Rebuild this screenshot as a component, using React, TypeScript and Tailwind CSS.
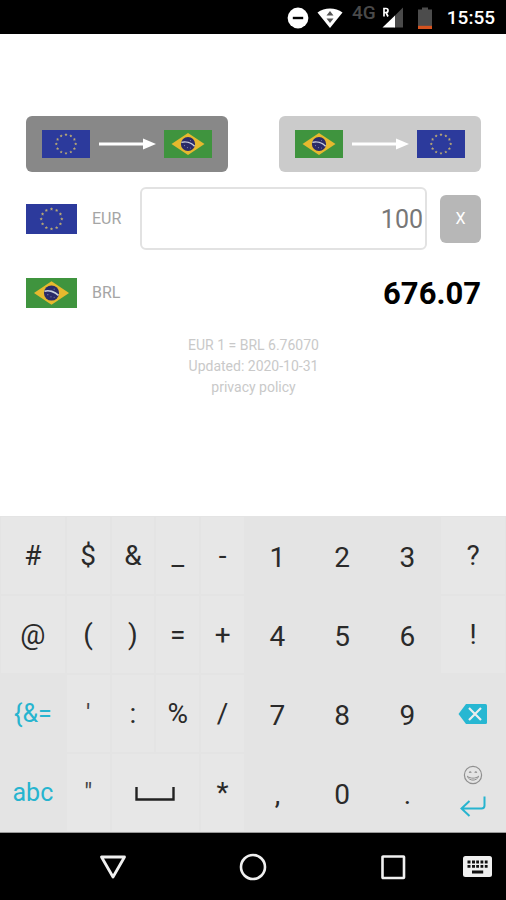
import { useState } from "react";

const STAR_ANGLES = [0, 30, 60, 90, 120, 150, 180, 210, 240, 270, 300, 330];

function starPoints(cx: number, cy: number, r: number) {
  const points: string[] = [];
  for (let i = 0; i < 10; i++) {
    const radius = i % 2 === 0 ? r : r * 0.5;
    const a = (Math.PI / 5) * i - Math.PI / 2;
    points.push(`${(cx + radius * Math.cos(a)).toFixed(2)},${(cy + radius * Math.sin(a)).toFixed(2)}`);
  }
  return points.join(" ");
}

function EuFlag({ className }: { className: string }) {
  return (
    <svg viewBox="0 0 48 28" preserveAspectRatio="none" className={className} role="img" aria-label="EU flag">
      <rect width="48" height="28" fill="#2c3a9c" />
      {STAR_ANGLES.map((deg) => {
        const a = (deg * Math.PI) / 180;
        return (
          <polygon
            key={deg}
            points={starPoints(24 + 9.7 * Math.cos(a), 14 + 9.3 * Math.sin(a), 1.6)}
            fill="#b8a874"
          />
        );
      })}
    </svg>
  );
}

function BrazilFlag({ className }: { className: string }) {
  return (
    <svg viewBox="0 0 48 28" preserveAspectRatio="none" className={className} role="img" aria-label="Brazil flag">
      <rect width="48" height="28" fill="#3f943e" />
      <polygon points="24,3 40.5,14 24,25 7.5,14" fill="#e6b92e" />
      <circle cx="24" cy="14" r="7.1" fill="#2a2a68" />
      <path d="M17.4 12.4 C21.5 11.2 27 12.6 30.6 16.2" fill="none" stroke="#c9cfdd" strokeWidth="1.5" />
      <g fill="#8285ab">
        <circle cx="20.5" cy="15.6" r="0.6" />
        <circle cx="23.5" cy="17.6" r="0.6" />
        <circle cx="26.5" cy="18" r="0.5" />
        <circle cx="26.5" cy="10.4" r="0.5" />
      </g>
    </svg>
  );
}

function Arrow() {
  return (
    <svg viewBox="0 0 58 12" className="h-3 w-[58px]" aria-hidden="true">
      <path d="M1 6H46" stroke="#fff" strokeWidth="3" />
      <path d="M45 0.5L58 6L45 11.5Z" fill="#fff" />
    </svg>
  );
}

function StatusBar() {
  return (
    <header className="flex h-[34px] items-center justify-end bg-black pt-px pr-[11px]">
      <svg viewBox="0 0 22 22" className="mr-2 size-[22px]" aria-hidden="true">
        <circle cx="11" cy="11" r="10.4" fill="#fff" />
        <rect x="5.8" y="9.8" width="10.4" height="2.4" fill="#000" />
      </svg>
      <svg viewBox="0 0 26 20" className="mr-[9px] h-5 w-[26px]" aria-hidden="true">
        <path d="M0.5 4.6C7.5-1 18.5-1 25.5 4.6L13 20Z" fill="#fff" />
        <path d="M13 3L16.5 7.4H9.5Z M13 15L16.500 10.600H9.500Z" fill="#555" />
      </svg>
      <span className="mr-[6px] -mt-[9px] text-[19px] leading-5 font-medium text-[#4a4a4a]">4G</span>
      <svg viewBox="0 0 22 21" className="mr-[14px] h-[21px] w-[22px]" aria-hidden="true">
        <path d="M21 0.5V20.5H12V9.5Z" fill="#4a4a4a" />
        <path d="M0.5 20.5L13 8.5V20.5Z" fill="#fff" />
        <path d="M2 9.5V1.5H4A2 2 0 0 1 4 5.5H2M4 5.5L6 9.5" fill="none" stroke="#fff" strokeWidth="1.7" />
      </svg>
      <svg viewBox="0 0 14 22" className="mr-[15px] h-[22px] w-[14px]" aria-hidden="true">
        <path d="M4 0.5H10V2.5H14V22H0V2.5H4Z" fill="#4c4c4c" />
        <rect y="18.8" width="14" height="3.2" fill="#d5531f" />
      </svg>
      <time className="text-[19px] leading-6 font-medium text-white">15:55</time>
    </header>
  );
}

type Direction = "eur-brl" | "brl-eur";

function Converter() {
  const [direction, setDirection] = useState<Direction>("eur-brl");
  const [amount, setAmount] = useState("100");
  const active = "bg-[#888]";
  const idle = "bg-[#cbcbcb]";

  return (
    <main className="flex-1 bg-white pt-[82px] pr-[25px] pb-6 pl-[26px]">
      <div className="grid grid-cols-2 gap-[51px]">
        <button
          type="button"
          aria-label="EUR to BRL"
          aria-pressed={direction === "eur-brl"}
          onClick={() => setDirection("eur-brl")}
          className={`flex h-14 items-center justify-between rounded-md px-4 ${direction === "eur-brl" ? active : idle}`}
        >
          <EuFlag className="h-7 w-12" />
          <Arrow />
          <BrazilFlag className="h-7 w-12" />
        </button>
        <button
          type="button"
          aria-label="BRL to EUR"
          aria-pressed={direction === "brl-eur"}
          onClick={() => setDirection("brl-eur")}
          className={`flex h-14 items-center justify-between rounded-md px-4 ${direction === "brl-eur" ? active : idle}`}
        >
          <BrazilFlag className="h-7 w-12" />
          <Arrow />
          <EuFlag className="h-7 w-12" />
        </button>
      </div>

      <div className="mt-[15px] flex items-center">
        <EuFlag className="h-[30px] w-[51px] shrink-0" />
        <label htmlFor="amount" className="w-[63px] shrink-0 pl-[15px] text-[16px] leading-6 text-[#a5a5a5]">
          EUR
        </label>
        <input
          id="amount"
          inputMode="decimal"
          value={amount}
          onChange={(e) => setAmount(e.target.value)}
          className="h-[63px] min-w-0 flex-1 rounded-md border-2 border-[#e2e2e2] bg-white pt-[2px] pr-[2px] text-right text-[25px] text-[#777] outline-none"
        />
        <button
          type="button"
          aria-label="Clear"
          onClick={() => setAmount("")}
          className="ml-[13px] h-12 w-[41px] shrink-0 rounded-md bg-[#b7b7b7] text-[16px] text-white"
        >
          X
        </button>
      </div>

      <div className="mt-[23px] flex h-10 items-center">
        <BrazilFlag className="h-[30px] w-[51px] shrink-0" />
        <span className="pl-[15px] text-[16px] leading-6 text-[#a5a5a5]">BRL</span>
        <output htmlFor="amount" className="ml-auto pt-[2px] text-[31px] leading-10 font-bold text-black">
          676.07
        </output>
      </div>

      <div className="mt-[22px] text-center text-[14px] leading-[21px] text-[#c9c9c9]">
        <p>EUR 1 = BRL 6.76070</p>
        <p>Updated: 2020-10-31</p>
        <a href="#privacy">privacy policy</a>
      </div>
    </main>
  );
}

function Tile({ label }: { label: string }) {
  return (
    <button type="button" className="m-px flex items-center justify-center bg-[#e7e7e7] text-[28px] text-[#2a2a2a]">
      {label}
    </button>
  );
}

function Digit({ label }: { label: string }) {
  return (
    <button type="button" className="flex items-center justify-center pt-1 text-[28px] text-[#2a2a2a]">
      {label}
    </button>
  );
}

function QuoteTile({ label }: { label: string }) {
  return (
    <button type="button" className="m-px flex items-center justify-center bg-[#e7e7e7] text-[25px] text-[#444]">
      {label}
    </button>
  );
}

function ModeKey({ label }: { label: string }) {
  return (
    <button type="button" className="flex items-center justify-center text-[25px] text-[#27b4cf]">
      {label}
    </button>
  );
}

function Keyboard() {
  return (
    <section
      aria-label="Keyboard"
      className="grid auto-rows-[79px] grid-cols-[66fr_45fr_45fr_45fr_45fr_65fr_65fr_66fr_66fr] border-b border-[#999] bg-[#e4e4e4]"
    >
      <Tile label="#" />
      <Tile label="$" />
      <Tile label="&" />
      <Tile label="_" />
      <Tile label="-" />
      <Digit label="1" />
      <Digit label="2" />
      <Digit label="3" />
      <Tile label="?" />

      <Tile label="@" />
      <Tile label="(" />
      <Tile label=")" />
      <Tile label="=" />
      <Tile label="+" />
      <Digit label="4" />
      <Digit label="5" />
      <Digit label="6" />
      <Tile label="!" />

      <ModeKey label="{&=" />
      <QuoteTile label="'" />
      <Tile label=":" />
      <Tile label="%" />
      <Tile label="/" />
      <Digit label="7" />
      <Digit label="8" />
      <Digit label="9" />
      <button type="button" aria-label="Backspace" className="flex items-center justify-center">
        <svg viewBox="0 0 30 20" className="h-5 w-[30px]" aria-hidden="true">
          <path d="M8 0H27.5A1.5 1.5 0 0 1 29 1.5V18.5A1.5 1.5 0 0 1 27.5 20H8L0.5 10Z" fill="#27b7d2" />
          <path d="M11 4L23 16M23 4L11 16" stroke="#ededed" strokeWidth="2.2" />
        </svg>
      </button>

      <ModeKey label="abc" />
      <QuoteTile label={'"'} />
      <button type="button" aria-label="Space" className="col-span-2 m-px flex items-center justify-center bg-[#e7e7e7] pt-[2px]">
        <svg viewBox="0 0 40 14" className="h-[14px] w-10" aria-hidden="true">
          <path d="M1.5 0V12.5H38.5V0" fill="none" stroke="#222" strokeWidth="2.4" />
        </svg>
      </button>
      <Tile label="*" />
      <Digit label="," />
      <Digit label="0" />
      <Digit label="." />
      <button type="button" aria-label="Enter" className="flex flex-col items-center justify-center gap-[11px] pb-1">
        <svg viewBox="0 0 20 20" className="size-5" fill="none" stroke="#8f8f8f" aria-hidden="true">
          <circle cx="10" cy="10" r="8.6" strokeWidth="1.2" />
          <path d="M4.4 11.2C5.8 16.4 14.2 16.4 15.6 11.2C12.600 13.800 7.400 13.800 4.400 11.200Z" strokeWidth="1" />
          <path d="M6.200 7.800Q7.200 6 8.200 7.800M11.800 7.800Q12.800 6 13.800 7.800" strokeWidth="1.200" />
        </svg>
        <svg viewBox="0 0 26 21" className="h-[21px] w-[26px]" fill="none" stroke="#27b4cf" strokeWidth="2" aria-hidden="true">
          <path d="M24.500 0.500V9.500Q24.500 12.500 21.500 12.500H2M9.500 5L1.500 12.500L9.500 20" />
        </svg>
      </button>
    </section>
  );
}

function NavigationBar() {
  return (
    <nav
      aria-label="System navigation"
      className="grid h-[67px] grid-cols-[43fr_140fr_140fr_140fr_43fr] items-center bg-black"
    >
      <button type="button" aria-label="Back" className="col-start-2 flex justify-center">
        <svg viewBox="0 0 28 28" className="size-7" aria-hidden="true">
          <path d="M2.500 4H25.500L14 24Z" fill="none" stroke="#f0f0f0" strokeWidth="2.8" strokeLinejoin="round" />
        </svg>
      </button>
      <button type="button" aria-label="Home" className="flex justify-center">
        <svg viewBox="0 0 28 28" className="size-7" aria-hidden="true">
          <circle cx="14" cy="14" r="12" fill="none" stroke="#f0f0f0" strokeWidth="2.6" />
        </svg>
      </button>
      <button type="button" aria-label="Recent apps" className="flex justify-center">
        <svg viewBox="0 0 28 28" className="size-7" aria-hidden="true">
          <rect x="3.500" y="3.500" width="21.500" height="21.500" rx="0.500" fill="none" stroke="#f0f0f0" strokeWidth="2.600" />
        </svg>
      </button>
      <button type="button" aria-label="Switch keyboard" className="flex justify-start">
        <svg viewBox="0 0 29 21" className="h-[21px] w-[29px]" aria-hidden="true">
          <rect width="29" height="21" rx="2.500" fill="#f0f0f0" />
          <path
            d="M4.500 6H7.500M9 6H12M13.200 6H16M17.500 6H20.300M21.800 6H24.600M4.500 10.400H7.500M9 10.400H12M13.200 10.400H16M17.500 10.400H20.300M21.800 10.400H24.600M9 16H20.200"
            stroke="#111"
            strokeWidth="2.800"
          />
        </svg>
      </button>
    </nav>
  );
}

export default function App() {
  return (
    <div className="flex min-h-screen flex-col bg-white font-['Roboto','Liberation_Sans',sans-serif]">
      <StatusBar />
      <Converter />
      <Keyboard />
      <NavigationBar />
    </div>
  );
}
